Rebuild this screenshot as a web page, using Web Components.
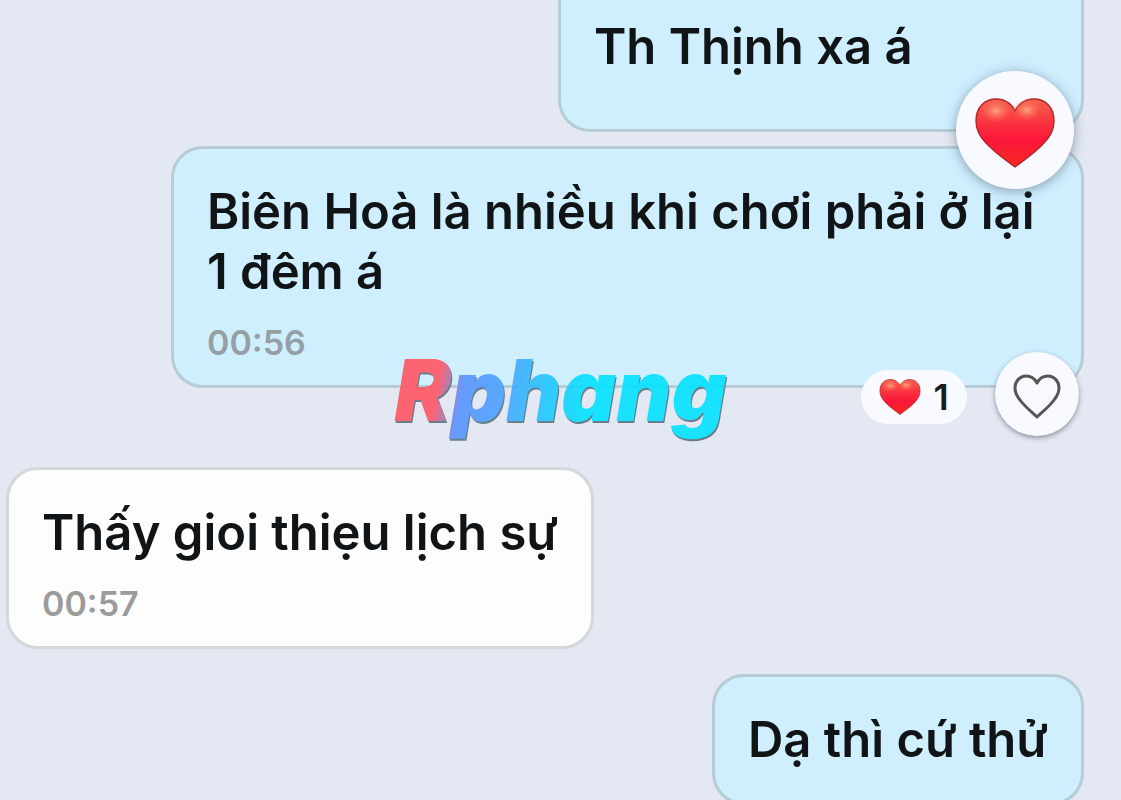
<!DOCTYPE html>
<html lang="vi">
<head>
<meta charset="utf-8">
<meta name="viewport" content="width=device-width, initial-scale=1">
<title>Chat</title>
<style>
  html, body { height: 100%; }
  body { margin: 0; overflow: hidden; background: #e3e8f3; color: #101416; font-family: Inter, "Noto Sans", sans-serif; }
</style>
</head>
<body>
<chat-thread>
  <chat-message side="out" continued>
    Th Thịnh xa á
    <reaction-button slot="reactions" kind="big" label="Thả tim"></reaction-button>
  </chat-message>
  <chat-message side="out" long time="00:56">
    Biên Hoà là nhiều khi chơi phải ở lại 1 đêm á
    <reaction-button slot="reactions" kind="count" label="1 lượt thả tim">1</reaction-button>
    <reaction-button slot="reactions" kind="add" label="Thả tim"></reaction-button>
  </chat-message>
  <chat-message side="in" time="00:57">Thấy gioi thiẹu lịch sự</chat-message>
  <chat-message side="out">Dạ thì cứ thử</chat-message>
  <brand-mark slot="overlay">Rphang</brand-mark>
</chat-thread>
<script>
class ChatThread extends HTMLElement {
  constructor() {
    super();
    this.attachShadow({ mode: "open" }).innerHTML = `
      <style>
        :host { display: block; position: relative; height: 100vh; overflow: hidden; }
        main { display: flex; flex-direction: column; padding: 0 37px 0 6px; }
      </style>
      <main><slot></slot></main>
      <slot name="overlay"></slot>`;
  }
}

class ChatMessage extends HTMLElement {
  constructor() {
    super();
    const time = this.getAttribute("time");
    this.attachShadow({ mode: "open" }).innerHTML = `
      <style>
        :host { display: block; position: relative; box-sizing: border-box; max-width: 86%;
          margin-bottom: 25px; padding: 33px 33px 22px; border: 3px solid #b6cdd6; border-radius: 32px;
          background: #cfefff; font-size: 49px; line-height: 60px; font-weight: 600; }
        :host([side="out"]) { align-self: flex-end; }
        :host([side="in"]) { align-self: flex-start; background: #fdfdfd; border-color: #d5d8db; }
        :host([continued]) { min-width: 526px; margin-bottom: 14px; padding: 17px 33px 52px;
          border-top: 0; border-radius: 0 0 32px 32px; z-index: 1; }
        :host([long]) { width: 913px; margin-bottom: 79px; }
        :host(:last-of-type) { padding-bottom: 32px; }
        p { margin: 0; }
        time { display: block; margin-top: 21px; font-size: 34px; line-height: 40px; font-weight: 600;
          color: #959fa4; }
        :host([side="in"]) time { color: #9b9b9b; }
      </style>
      <p><slot></slot></p>
      ${time ? `<time datetime="${time}">${time}</time>` : ""}
      <slot name="reactions"></slot>`;
  }
}

const HEART = `
  <svg viewBox="0 0 80 70" aria-hidden="true">
    <defs>
      <linearGradient id="body" x1="0" y1="0" x2="0" y2="1">
        <stop offset="0" stop-color="#f5624e"/><stop offset=".4" stop-color="#fb2c3f"/>
        <stop offset=".62" stop-color="#fb1738"/><stop offset="1" stop-color="#f52a22"/>
      </linearGradient>
      <radialGradient id="shine"><stop offset="0" stop-color="#ffb488" stop-opacity=".85"/>
        <stop offset="1" stop-color="#ff6550" stop-opacity="0"/></radialGradient>
    </defs>
    <path d="M40 69C31 62 19 54 11 45C4 38 1 31 1 23C1 9 10 1 21 1C30 1 37 6 40 13C43 6 50 1 59 1C70 1 79 9 79 23C79 31 76 38 69 45C61 54 49 62 40 69Z"
      fill="url(#body)" stroke="#b3262b" stroke-width="1.4"/>
    <ellipse cx="21" cy="13" rx="16" ry="12" fill="url(#shine)"/>
    <ellipse cx="52" cy="12" rx="15" ry="11" fill="url(#shine)"/>
  </svg>`;

const OUTLINE = `
  <svg viewBox="0 0 48 45" aria-hidden="true">
    <path d="M24 43C19 38 12 33 7 26C3 21 2 18 2 14C2 7 7 2 13 2C18 2 22 5 24 9C26 5 30 2 35 2C41 2 46 7 46 14C46 18 45 21 41 26C36 33 29 38 24 43Z"
      fill="none" stroke="#565656" stroke-width="3" stroke-linejoin="round"/>
  </svg>`;

class ReactionButton extends HTMLElement {
  constructor() {
    super();
    const art = this.getAttribute("kind") === "add" ? OUTLINE : HEART;
    this.attachShadow({ mode: "open" }).innerHTML = `
      <style>
        :host { display: block; position: absolute; }
        button { display: flex; align-items: center; justify-content: center; gap: 12px;
          box-sizing: border-box; width: 118px; height: 118px; margin: 0; padding: 0; border: 0;
          border-radius: 60px; background: #f8faff; color: #1b1b1d; font: inherit;
          box-shadow: 0 2px 12px rgba(60, 75, 95, .5); cursor: pointer; }
        svg { display: block; width: 80px; height: 70px; margin-top: 6px; }
        :host([kind="big"]) { right: 7px; bottom: -60px; }
        :host([kind="count"]) { right: 114px; bottom: -39px; font-size: 36px; line-height: 54px; font-weight: 600; }
        :host([kind="count"]) button { width: 106px; height: 54px; box-shadow: none; }
        :host([kind="count"]) svg { width: 42px; height: 36px; margin: 0; }
        :host([kind="add"]) { right: 2px; bottom: -51px; }
        :host([kind="add"]) button { width: 84px; height: 84px; box-shadow: 0 2px 5px rgba(50, 60, 80, .5); }
        :host([kind="add"]) svg { width: 48px; height: 45px; margin-top: 4px; }
      </style>
      <button type="button" aria-label="${this.getAttribute("label")}">${art}<slot></slot></button>`;
  }
}

class BrandMark extends HTMLElement {
  constructor() {
    super();
    this.attachShadow({ mode: "open" }).innerHTML = `
      <style>
        :host { display: flex; align-items: center; justify-content: center; position: absolute;
          inset: 0; padding-bottom: 18px; pointer-events: none; z-index: 2; }
        span { padding: 0 8px; font-size: 85px; line-height: 104px; font-weight: 900; font-style: italic;
          color: transparent; background: linear-gradient(100deg, #ff5967 16%, #5b95ff 23%, #4ea3ff 34%, #2fbfff 43%, #08e2ff 58%);
          -webkit-background-clip: text; background-clip: text; opacity: .92;
          filter: drop-shadow(1px 2px 0 #5f7583); }
      </style>
      <span><slot></slot></span>`;
  }
}

customElements.define("chat-thread", ChatThread);
customElements.define("chat-message", ChatMessage);
customElements.define("reaction-button", ReactionButton);
customElements.define("brand-mark", BrandMark);
</script>
</body>
</html>
